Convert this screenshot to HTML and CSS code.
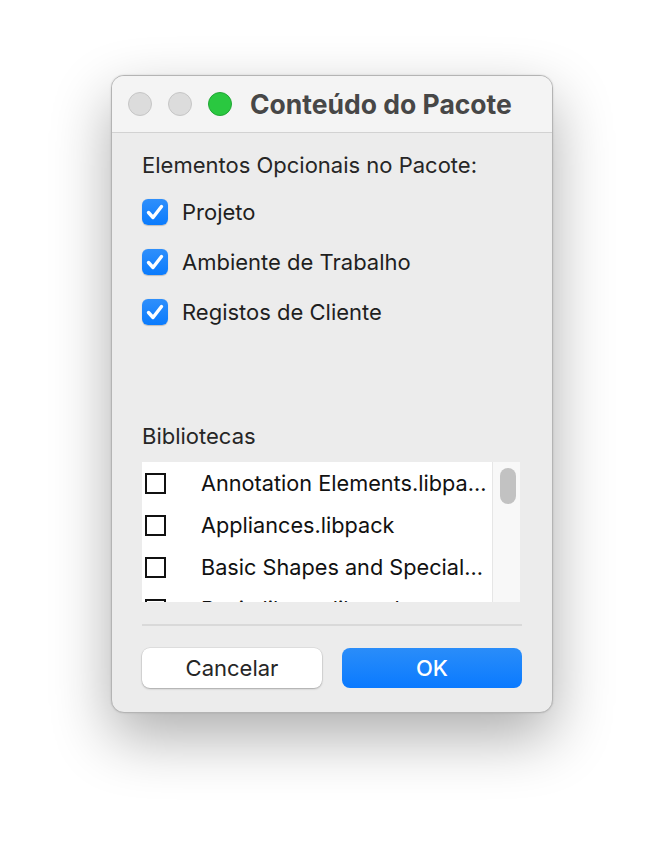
FILE: index.html
```html
<!DOCTYPE html>
<html lang="pt">
<head>
<meta charset="utf-8">
<title>Conteúdo do Pacote</title>
<link rel="stylesheet" href="styles.css">
</head>
<body>
<div class="stage">
  <div class="window">
    <div class="titlebar">
      <div class="lights">
        <span class="light gray"></span>
        <span class="light gray"></span>
        <span class="light green"></span>
      </div>
      <div class="title">Conteúdo do Pacote</div>
    </div>
    <div class="content">
      <div class="section-label">Elementos Opcionais no Pacote:</div>
      <div class="checks">
        <label class="check"><span class="cb on"><svg viewBox="0 0 26 26" width="26" height="26"><path d="M6.5 13.5l4.5 5 8.5-11" fill="none" stroke="#fff" stroke-width="3.4" stroke-linecap="round" stroke-linejoin="round"/></svg></span><span class="check-text">Projeto</span></label>
        <label class="check"><span class="cb on"><svg viewBox="0 0 26 26" width="26" height="26"><path d="M6.5 13.5l4.5 5 8.5-11" fill="none" stroke="#fff" stroke-width="3.4" stroke-linecap="round" stroke-linejoin="round"/></svg></span><span class="check-text">Ambiente de Trabalho</span></label>
        <label class="check"><span class="cb on"><svg viewBox="0 0 26 26" width="26" height="26"><path d="M6.5 13.5l4.5 5 8.5-11" fill="none" stroke="#fff" stroke-width="3.4" stroke-linecap="round" stroke-linejoin="round"/></svg></span><span class="check-text">Registos de Cliente</span></label>
      </div>
      <div class="section-label libs">Bibliotecas</div>
      <div class="listbox">
        <div class="list">
          <div class="row"><span class="box"></span><span class="row-text">Annotation Elements.libpa…</span></div>
          <div class="row"><span class="box"></span><span class="row-text">Appliances.libpack</span></div>
          <div class="row"><span class="box"></span><span class="row-text">Basic Shapes and Special…</span></div>
          <div class="row"><span class="box"></span><span class="row-text">Basic library.libpack</span></div>
        </div>
        <div class="scrollbar"><div class="thumb"></div></div>
      </div>
      <div class="separator"></div>
      <div class="buttons">
        <button class="btn cancel">Cancelar</button>
        <button class="btn ok">OK</button>
      </div>
    </div>
  </div>
</div>
</body>
</html>
```
FILE: styles.css
```css
* { box-sizing: border-box; }
html, body { margin: 0; padding: 0; }
body {
  width: 664px;
  height: 860px;
  background: #ffffff;
  font-family: Inter, "Liberation Sans", sans-serif;
  color: #262626;
  overflow: hidden;
}
.stage {
  padding: 75px 0 0 111px;
}
.window {
  width: 442px;
  height: 638px;
  background: #ececec;
  border: 1px solid #b4b4b4;
  border-radius: 13px;
  box-shadow: 0 24px 60px rgba(0,0,0,0.32), 0 0 2px rgba(0,0,0,0.15);
  overflow: hidden;
  display: flex;
  flex-direction: column;
}
.titlebar {
  height: 57px;
  background: #f4f4f4;
  border-bottom: 1px solid #d2d2d2;
  display: flex;
  align-items: center;
  padding-left: 16px;
  flex-shrink: 0;
}
.lights {
  display: flex;
  gap: 16px;
}
.light {
  width: 24px;
  height: 24px;
  border-radius: 50%;
  display: block;
}
.light.gray {
  background: #dcdcdc;
  border: 1px solid #c6c6c6;
}
.light.green {
  background: #2ac840;
  border: 1px solid #20a634;
}
.title {
  margin-left: 18px;
  font-size: 26.5px;
  line-height: 32px;
  font-weight: 700;
  color: #474747;
}
.content {
  padding: 20px 30px 0 30px;
  display: flex;
  flex-direction: column;
}
.section-label {
  font-size: 22px;
  line-height: 24px;
  color: #262626;
}
.checks {
  display: flex;
  flex-direction: column;
  gap: 24px;
  margin-top: 22px;
}
.check {
  display: flex;
  align-items: center;
  height: 26px;
}
.cb {
  width: 26px;
  height: 26px;
  border-radius: 6px;
  display: block;
  flex-shrink: 0;
}
.cb.on {
  background: linear-gradient(#2f8ffb, #0a7bfd);
  box-shadow: 0 0.5px 1px rgba(0,0,0,0.2);
}
.cb svg { display: block; }
.check-text {
  margin-left: 14px;
  font-size: 22px;
  line-height: 26px;
  color: #1f1f1f;
}
.libs {
  margin-top: 99px;
}
.listbox {
  margin-top: 14px;
  height: 140px;
  width: 378px;
  display: flex;
  background: #ffffff;
  overflow: hidden;
}
.list {
  width: 351px;
  padding-top: 0;
  border-right: 1px solid #e6e6e6;
}
.row {
  height: 42px;
  display: flex;
  align-items: center;
  padding-left: 3px;
}
.box {
  width: 21px;
  height: 21px;
  border: 2px solid #111;
  display: block;
  flex-shrink: 0;
}
.row-text {
  margin-left: 35px;
  font-size: 21.7px;
  line-height: 26px;
  color: #111;
  white-space: nowrap;
}
.scrollbar {
  width: 27px;
  background: #f8f8f8;
  padding: 6px 0 0 7px;
}
.thumb {
  width: 16px;
  height: 36px;
  border-radius: 8px;
  background: #c2c2c2;
}
.separator {
  margin-top: 22px;
  height: 2px;
  width: 380px;
  background: #d9d9d9;
}
.buttons {
  margin-top: 22px;
  display: flex;
  gap: 20px;
}
.btn {
  width: 180px;
  height: 40px;
  border-radius: 8px;
  border: none;
  font-family: inherit;
  font-size: 22px;
  padding: 0;
}
.cancel {
  background: #ffffff;
  color: #262626;
  box-shadow: 0 1px 2px rgba(0,0,0,0.25), 0 0 0 0.5px rgba(0,0,0,0.1);
}
.ok {
  background: linear-gradient(#2a8df9, #0a7aff);
  color: #ffffff;
  font-weight: 500;
}
```
